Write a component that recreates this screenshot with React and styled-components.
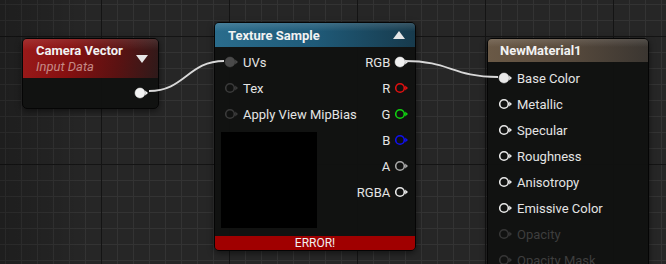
import React from "react";
import styled, { createGlobalStyle, css } from "styled-components";

const GlobalStyle = createGlobalStyle`
  html, body {
    margin: 0;
    padding: 0;
    background: #262626;
  }
  body {
    font-family: Roboto, "Open Sans", "Liberation Sans", sans-serif;
  }
`;

const Canvas = styled.div`
  position: relative;
  width: 666px;
  height: 264px;
  overflow: hidden;
  background-color: #262626;
  background-image:
    linear-gradient(to right, rgba(0, 0, 0, 0.22), rgba(0, 0, 0, 0) 90px),
    linear-gradient(to right, #141414 1px, transparent 1px),
    linear-gradient(to bottom, #141414 1px, transparent 1px),
    linear-gradient(to right, #333333 1px, transparent 1px),
    linear-gradient(to bottom, #333333 1px, transparent 1px);
  background-size: 100% 100%, 128px 100%, 100% 128px, 16px 100%, 100% 16px;
  background-position: 0 0, 101px 0, 0 36px, 5px 0, 0 4px;
`;

const Wires = styled.svg`
  position: absolute;
  left: 0;
  top: 0;
  pointer-events: none;
`;

const headerTones = {
  red: css`
    background: linear-gradient(180deg, rgba(255, 255, 255, 0.1), rgba(0, 0, 0, 0) 30%),
      linear-gradient(100deg, #9a1a1a 0%, #861010 35%, #5a1212 70%, #2e1a1a 100%);
  `,
  blue: css`
    background: linear-gradient(180deg, rgba(255, 255, 255, 0.14), rgba(0, 0, 0, 0) 35%),
      linear-gradient(90deg, #2a6c8c 0%, #1f5a78 50%, #173a4c 100%);
  `,
  brown: css`
    background: linear-gradient(180deg, rgba(255, 255, 255, 0.12), rgba(0, 0, 0, 0) 35%),
      linear-gradient(90deg, #6a5946 0%, #5a4c3e 45%, #3b3631 100%);
  `,
};

const Node = styled.div`
  position: absolute;
  left: ${(p) => p.$x}px;
  top: ${(p) => p.$y}px;
  width: ${(p) => p.$w}px;
  display: flex;
  flex-direction: column;
  background: rgba(17, 18, 17, 0.97);
  border: 1px solid #050505;
  border-radius: 5px;
  box-shadow: 0 2px 6px rgba(0, 0, 0, 0.5);
  overflow: hidden;
`;

const Header = styled.div`
  ${(p) => headerTones[p.$tone]}
  height: ${(p) => p.$h}px;
  box-sizing: border-box;
  padding: 0 10px 0 ${(p) => p.$pl}px;
  display: flex;
  align-items: center;
  justify-content: space-between;
`;

const TitleBlock = styled.div`
  display: flex;
  flex-direction: column;
  gap: 1px;
`;

const Title = styled.div`
  color: #f2f2f2;
  font-weight: 700;
  font-size: 13px;
  line-height: 15px;
`;

const Subtitle = styled.div`
  color: #c48a86;
  font-style: italic;
  font-size: 13px;
  line-height: 15px;
`;

const Arrow = styled.span`
  width: 0;
  height: 0;
  border-left: 6px solid transparent;
  border-right: 6px solid transparent;
  ${(p) =>
    p.$up
      ? css`border-bottom: 8px solid #e6e6e6;`
      : css`border-top: 8px solid #e6e6e6;`}
`;

const OutputBody = styled.div`
  height: 30px;
  display: flex;
  align-items: center;
  justify-content: flex-end;
  padding-right: 9px;
`;

const SampleBody = styled.div`
  display: flex;
  justify-content: space-between;
  padding: 2px 10px 8px 6px;
`;

const Column = styled.div`
  display: flex;
  flex-direction: column;
  align-items: ${(p) => (p.$right ? "flex-end" : "flex-start")};
`;

const PinRow = styled.div`
  height: 26px;
  display: flex;
  align-items: center;
  gap: 4px;
  padding-left: ${(p) => p.$pl || 0}px;
  font-size: 13px;
  color: ${(p) => (p.$dim ? "#3e3e3e" : "#e4e4e4")};
  white-space: nowrap;
`;

const Preview = styled.div`
  width: 96px;
  height: 96px;
  margin-top: 5px;
  background: #000;
`;

const ErrorBar = styled.div`
  height: 14px;
  background: #a00000;
  color: #f0f0f0;
  font-size: 12px;
  line-height: 14px;
  text-align: center;
`;

const MaterialBody = styled.div`
  display: flex;
  flex-direction: column;
  padding: 3px 0 0 10px;
`;

const Pin = ({ color = "#e8e8e8", filled, dim }) => (
  <svg width="15" height="12" viewBox="0 0 15 12" style={{ flex: "none" }}>
    <circle
      cx="6"
      cy="6"
      r={filled ? 5 : 4.3}
      fill={filled ? color : "none"}
      stroke={color}
      strokeWidth={filled ? 0.5 : 1.6}
      opacity={dim ? 1 : 1}
    />
    <polygon points="11.2,3.6 14,6 11.2,8.4" fill={color} />
  </svg>
);

const sampleInputs = [
  { label: "UVs", color: "#4a4a4a", filled: true },
  { label: "Tex", color: "#3a3a3a" },
  { label: "Apply View MipBias", color: "#3a3a3a" },
];

const sampleOutputs = [
  { label: "RGB", color: "#f0f0f0", filled: true },
  { label: "R", color: "#e01010" },
  { label: "G", color: "#10d010" },
  { label: "B", color: "#1010f0" },
  { label: "A", color: "#a8a8a8" },
  { label: "RGBA", color: "#e8e8e8" },
];

const materialInputs = [
  { label: "Base Color", filled: true },
  { label: "Metallic" },
  { label: "Specular" },
  { label: "Roughness" },
  { label: "Anisotropy" },
  { label: "Emissive Color" },
  { label: "Opacity", dim: true },
  { label: "Opacity Mask", dim: true },
];

export default function App() {
  return (
    <>
      <GlobalStyle />
      <Canvas>
        <Node $x={22} $y={38} $w={135}>
          <Header $tone="red" $h={39} $pl={13}>
            <TitleBlock>
              <Title>Camera Vector</Title>
              <Subtitle>Input Data</Subtitle>
            </TitleBlock>
            <Arrow />
          </Header>
          <OutputBody>
            <Pin filled color="#f2f2f2" />
          </OutputBody>
        </Node>

        <Node $x={214} $y={22} $w={200}>
          <Header $tone="blue" $h={24} $pl={13}>
            <Title>Texture Sample</Title>
            <Arrow $up />
          </Header>
          <SampleBody>
            <Column>
              {sampleInputs.map((p) => (
                <PinRow key={p.label} $pl={3}>
                  <Pin color={p.color} filled={p.filled} />
                  <span>{p.label}</span>
                </PinRow>
              ))}
              <Preview />
            </Column>
            <Column $right>
              {sampleOutputs.map((p) => (
                <PinRow key={p.label}>
                  <span>{p.label}</span>
                  <Pin color={p.color} filled={p.filled} />
                </PinRow>
              ))}
            </Column>
          </SampleBody>
          <ErrorBar>ERROR!</ErrorBar>
        </Node>

        <Node $x={487} $y={38} $w={160}>
          <Header $tone="brown" $h={23} $pl={12}>
            <Title>NewMaterial1</Title>
          </Header>
          <MaterialBody>
            {materialInputs.map((p) => (
              <PinRow key={p.label} $dim={p.dim}>
                <Pin
                  filled={p.filled}
                  color={p.dim ? "#363636" : "#e8e8e8"}
                />
                <span>{p.label}</span>
              </PinRow>
            ))}
          </MaterialBody>
        </Node>

        <Wires width="666" height="264">
          <path
            d="M 149 91 C 185 91, 188 61, 224 61"
            fill="none"
            stroke="#d8d8d8"
            strokeWidth="1.8"
          />
          <path
            d="M 405 61 C 450 61, 452 77, 498 77"
            fill="none"
            stroke="#d8d8d8"
            strokeWidth="1.8"
          />
        </Wires>
      </Canvas>
    </>
  );
}
